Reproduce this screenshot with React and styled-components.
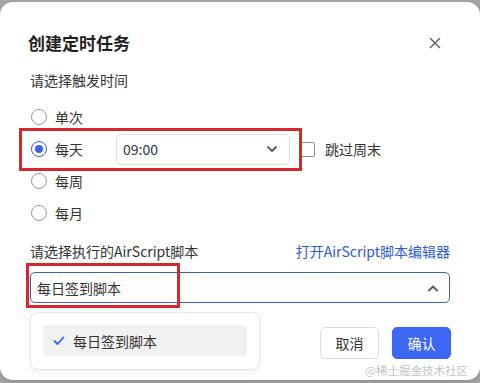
import React from "react";
import styled, { createGlobalStyle } from "styled-components";

const Global = createGlobalStyle`
  html, body { margin: 0; padding: 0; }
  body {
    background: #a9a9a9;
    width: 480px;
    height: 383px;
    overflow: hidden;
    font-family: "Noto Sans CJK SC", "Microsoft YaHei", sans-serif;
  }
`;

const Dialog = styled.div`
  position: relative;
  margin-top: 2px;
  width: 480px;
  height: 378px;
  box-sizing: border-box;
  background: #fff;
  border-radius: 13px;
  box-shadow: 0 2px 10px rgba(0, 0, 0, 0.18);
  padding: 27px 30px 0 30px;
  color: #333;
  font-size: 14px;
`;

const Header = styled.div`
  display: flex;
  align-items: center;
  justify-content: space-between;
  height: 28px;
`;

const Title = styled.h2`
  margin: 0 0 0 -2px;
  font-size: 17px;
  font-weight: 600;
  color: #1f1f1f;
  line-height: 28px;
`;

const CloseBtn = styled.button`
  border: none;
  background: none;
  padding: 0;
  margin-right: 9px;
  width: 12px;
  height: 12px;
  display: flex;
  cursor: pointer;
`;

const Label = styled.div`
  margin-top: ${(p) => p.$mt || 0}px;
  line-height: 20px;
  color: #333;
`;

const LabelRow = styled.div`
  display: flex;
  justify-content: space-between;
  align-items: center;
  margin-top: 12px;
  height: 20px;
  line-height: 20px;
`;

const Link = styled.a`
  color: #2d5bd3;
  text-decoration: none;
  cursor: pointer;
`;

const Options = styled.div`
  margin-top: 11px;
  display: flex;
  flex-direction: column;
`;

const OptionRow = styled.div`
  display: flex;
  align-items: center;
  height: 32px;
  padding-left: 1px;
`;

const RadioCircle = styled.span`
  width: 16px;
  height: 16px;
  box-sizing: border-box;
  border-radius: 50%;
  border: 1px solid ${(p) => (p.$checked ? "#3a5fd9" : "#9a9a9a")};
  display: flex;
  align-items: center;
  justify-content: center;
  flex: none;
  &::after {
    content: "";
    width: 8px;
    height: 8px;
    border-radius: 50%;
    background: #3a62ee;
    display: ${(p) => (p.$checked ? "block" : "none")};
  }
`;

const OptionText = styled.span`
  margin-left: 8px;
  width: 61px;
  color: #333;
`;

const TimeSelect = styled.div`
  width: 174px;
  height: 31px;
  box-sizing: border-box;
  border: 1px solid #dcdcdc;
  border-radius: 5px;
  display: flex;
  align-items: center;
  justify-content: space-between;
  padding: 0 11px 0 6px;
  color: #333;
`;

const CheckWrap = styled.label`
  display: flex;
  align-items: center;
  margin-left: 10px;
  gap: 10px;
  color: #333;
`;

const CheckBox = styled.span`
  width: 15px;
  height: 15px;
  box-sizing: border-box;
  border: 1px solid #8c8c8c;
  border-radius: 2px;
`;

const ScriptSelect = styled.div`
  margin-top: 11px;
  height: 31px;
  box-sizing: border-box;
  border: 1px solid #3f5fc4;
  border-radius: 5px;
  display: flex;
  align-items: center;
  justify-content: space-between;
  padding: 0 10px 0 6px;
  color: #333;
`;

const Footer = styled.div`
  margin-top: 24px;
  display: flex;
  justify-content: flex-end;
  gap: 13px;
  margin-right: -1px;
`;

const Button = styled.button`
  width: 59px;
  height: 32px;
  box-sizing: border-box;
  border-radius: 5px;
  font-family: inherit;
  font-size: 14px;
  cursor: pointer;
  border: 1px solid ${(p) => (p.$primary ? "#3c66f4" : "#dcdcdc")};
  background: ${(p) => (p.$primary ? "#3c66f4" : "#fff")};
  color: ${(p) => (p.$primary ? "#fff" : "#333")};
`;

const Dropdown = styled.div`
  position: absolute;
  left: 30px;
  top: 310px;
  width: 230px;
  height: 58px;
  box-sizing: border-box;
  background: #fff;
  border: 1px solid #e6e6e6;
  border-radius: 8px;
  box-shadow: 0 2px 6px rgba(0, 0, 0, 0.06);
  padding: 12px 12px;
`;

const DropItem = styled.div`
  height: 31px;
  border-radius: 4px;
  background: #f1f1f1;
  display: flex;
  align-items: center;
  padding-left: 10px;
  gap: 8px;
  color: #333;
`;

const Highlight = styled.div`
  position: absolute;
  border: 3px solid #d7262c;
  box-sizing: border-box;
  pointer-events: none;
`;

const Watermark = styled.div`
  position: absolute;
  right: 12px;
  top: 361px;
  font-size: 11.5px;
  color: #c4c4c4;
  line-height: 14px;
`;

const Chevron = ({ up }) => (
  <svg width="12" height="8" viewBox="0 0 12 8">
    <path
      d={up ? "M2 6.5 L6 2.5 L10 6.5" : "M2 2 L6 6 L10 2"}
      fill="none"
      stroke="#5a5a5a"
      strokeWidth="1.8"
      strokeLinecap="round"
      strokeLinejoin="round"
    />
  </svg>
);

const options = [
  { label: "单次" },
  { label: "每天", checked: true, time: true },
  { label: "每周" },
  { label: "每月" },
];

export default function App() {
  return (
    <>
      <Global />
      <Dialog>
        <Header>
          <Title>创建定时任务</Title>
          <CloseBtn aria-label="close">
            <svg width="12" height="12" viewBox="0 0 12 12">
              <path d="M1 1 L11 11 M11 1 L1 11" stroke="#666" strokeWidth="1.5" />
            </svg>
          </CloseBtn>
        </Header>
        <Label $mt={13}>请选择触发时间</Label>
        <Options>
          {options.map((o) => (
            <OptionRow key={o.label}>
              <RadioCircle $checked={o.checked} />
              <OptionText>{o.label}</OptionText>
              {o.time && (
                <>
                  <TimeSelect>
                    <span>09:00</span>
                    <Chevron />
                  </TimeSelect>
                  <CheckWrap>
                    <CheckBox />
                    <span>跳过周末</span>
                  </CheckWrap>
                </>
              )}
            </OptionRow>
          ))}
        </Options>
        <LabelRow>
          <span>请选择执行的AirScript脚本</span>
          <Link>打开AirScript脚本编辑器</Link>
        </LabelRow>
        <ScriptSelect>
          <span>每日签到脚本</span>
          <Chevron up />
        </ScriptSelect>
        <Footer>
          <Button>取消</Button>
          <Button $primary>确认</Button>
        </Footer>
        <Dropdown>
          <DropItem>
            <svg width="12" height="10" viewBox="0 0 12 10">
              <path
                d="M1.5 5 L4.5 8 L10.5 1.5"
                fill="none"
                stroke="#3a62ee"
                strokeWidth="1.8"
                strokeLinecap="round"
                strokeLinejoin="round"
              />
            </svg>
            <span>每日签到脚本</span>
          </DropItem>
        </Dropdown>
        <Highlight style={{ left: 19, top: 126, width: 283, height: 43 }} />
        <Highlight style={{ left: 26, top: 261, width: 154, height: 45 }} />
        <Watermark>@稀土掘金技术社区</Watermark>
      </Dialog>
    </>
  );
}
